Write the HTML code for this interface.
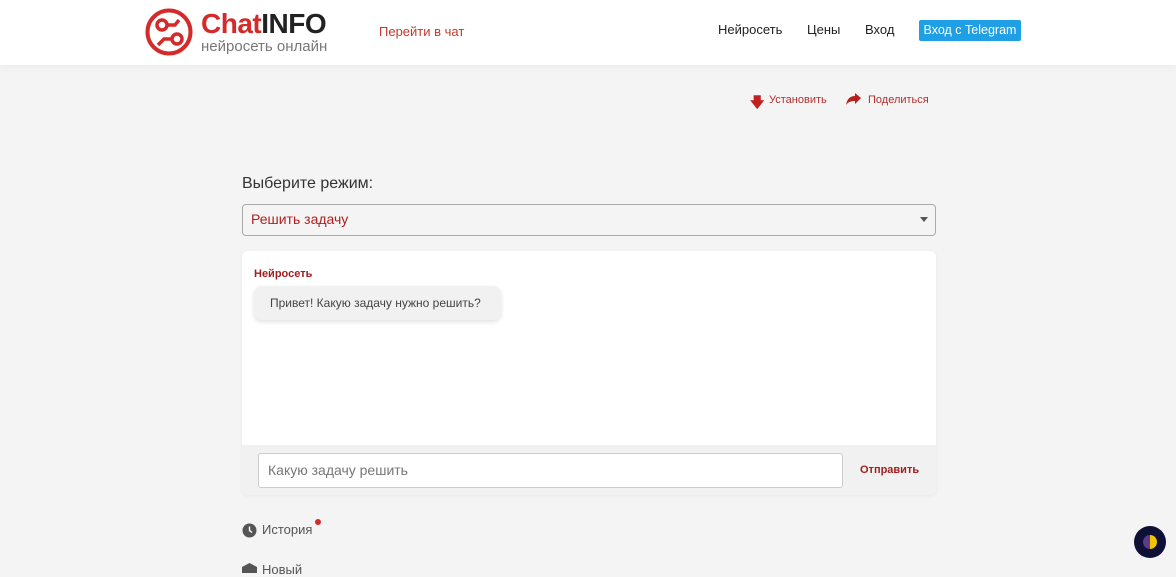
<!DOCTYPE html>
<html><head><meta charset="utf-8"><style>
*{box-sizing:border-box;margin:0;padding:0}
body{width:1176px;height:568px;overflow:hidden;background:#f4f4f4;font-family:"Liberation Sans","DejaVu Sans",sans-serif;position:relative}
.hdr{position:absolute;left:0;top:0;width:1176px;height:65px;background:#fff;box-shadow:0 2px 8px rgba(0,0,0,.04)}
.a{position:absolute;white-space:nowrap}
</style></head><body>
<div class="hdr">
<svg class="a" style="left:145px;top:8px" width="48" height="48" viewBox="0 0 48 48"><circle cx="24" cy="24" r="21.5" fill="none" stroke="#d42a2a" stroke-width="4"/><circle cx="17" cy="17" r="5" fill="none" stroke="#d42a2a" stroke-width="3.5"/><circle cx="32" cy="31" r="5" fill="none" stroke="#d42a2a" stroke-width="3.5"/><path d="M22 17h8l4-5M27 31h-8l-6 6" fill="none" stroke="#d42a2a" stroke-width="3.5"/></svg>
<div class="a" style="left:201px;top:8px;font-size:28px;font-weight:bold;color:#d42a2a;letter-spacing:-.5px">Chat<span style="color:#222">INFO</span></div>
<div class="a" style="left:201px;top:38px;font-size:15px;color:#777">нейросеть онлайн</div>
<div class="a" style="left:379px;top:24px;font-size:13px;color:#c0392b">Перейти в чат</div>
<div class="a" style="left:718px;top:22px;font-size:13px;color:#222">Нейросеть</div>
<div class="a" style="left:807px;top:22px;font-size:13px;color:#222">Цены</div>
<div class="a" style="left:865px;top:22px;font-size:13px;color:#222">Вход</div>
<div class="a" style="left:919px;top:20px;width:102px;height:21px;background:#1f9fe6;border-radius:2px;color:#fff;font-size:12.5px;text-align:center;line-height:21px">Вход с Telegram</div>
</div>
<div class="a" style="left:750px;top:92px;color:#c0201e;font-size:14px;font-weight:bold">🡇</div>
<div class="a" style="left:769px;top:94px;font-size:11px;color:#b03030">Установить</div>
<svg class="a" style="left:846px;top:93px" width="15" height="13" viewBox="0 0 15 13"><path d="M15 5 9 0v3C4 3 1 6 0 12c2-3 5-4 9-4v3z" fill="#b8201e"/></svg>
<div class="a" style="left:868px;top:94px;font-size:11px;color:#b03030">Поделиться</div>
<div class="a" style="left:242px;top:175px;font-size:16px;color:#333">Выберите режим:</div>
<div class="a" style="left:242px;top:204px;width:694px;height:32px;border:1px solid #aaa;border-radius:4px;background:#f4f4f4"></div>
<div class="a" style="left:251px;top:211px;font-size:14px;color:#b02020">Решить задачу</div>
<div class="a" style="left:920px;top:217px;border:4px solid transparent;border-top:5px solid #555"></div>
<div class="a" style="left:242px;top:251px;width:694px;height:244px;background:#fff;border-radius:6px;box-shadow:0 1px 4px rgba(0,0,0,.05)"></div>
<div class="a" style="left:242px;top:445px;width:694px;height:50px;background:#f1f1f1;border-radius:0 0 6px 6px"></div>
<div class="a" style="left:254px;top:268px;font-size:11px;font-weight:bold;color:#a02020">Нейросеть</div>
<div class="a" style="left:254px;top:286px;width:247px;height:34px;background:#f1f1f1;border-radius:8px;box-shadow:0 2px 5px rgba(0,0,0,.12);font-size:12px;color:#444;line-height:34px;padding-left:16px">Привет! Какую задачу нужно решить?</div>
<div class="a" style="left:258px;top:453px;width:585px;height:35px;background:#fff;border:1px solid #ccc;border-radius:3px;font-size:14px;color:#777;line-height:33px;padding-left:9px">Какую задачу решить</div>
<div class="a" style="left:860px;top:464px;font-size:11px;font-weight:bold;color:#a02020">Отправить</div>
<svg class="a" style="left:242px;top:523px" width="15" height="15" viewBox="0 0 15 15"><circle cx="7.5" cy="7.5" r="7" fill="#555"/><path d="M7.5 3.5v4l2.5 2" stroke="#fff" stroke-width="1.4" fill="none"/></svg>
<div class="a" style="left:262px;top:522px;font-size:13px;color:#555">История</div>
<div class="a" style="left:315px;top:519px;width:6px;height:6px;border-radius:50%;background:#d42a2a"></div>
<div class="a" style="left:242px;top:563px;width:15px;height:10px;background:#555;clip-path:polygon(50% 0,100% 40%,100% 100%,0 100%,0 40%)"></div>
<div class="a" style="left:262px;top:562px;font-size:13px;color:#555">Новый</div>
<div class="a" style="left:1134px;top:526px;width:32px;height:32px;border-radius:50%;background:#0f1035"></div>
<div class="a" style="left:1143px;top:535px;width:14px;height:14px;border-radius:50%;background:linear-gradient(90deg,#5b3b8a 50%,#f0c400 50%)"></div>
</body></html>
